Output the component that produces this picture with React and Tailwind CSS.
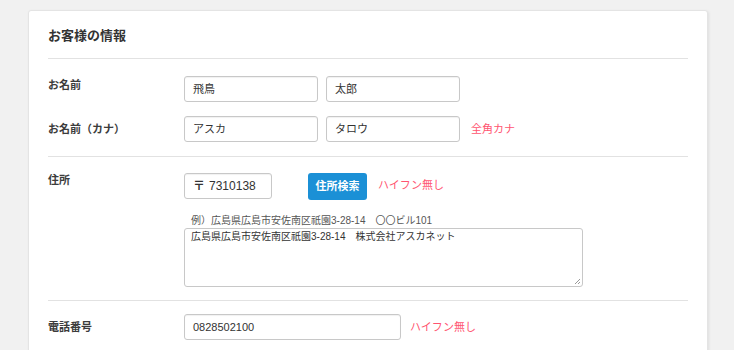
import React from "react";

const font = { fontFamily: '"Liberation Sans", "Noto Sans CJK JP", sans-serif' };

function Input({ w, children }) {
  return (
    <div
      className={`${w} h-[26px] flex items-center px-[8px] border border-[#c8c8c8] rounded-[3px] bg-white text-[11px] text-[#333] shadow-[inset_0_1px_1px_rgba(0,0,0,0.06)]`}
    >
      {children}
    </div>
  );
}

function Note({ children, className = "" }) {
  return <span className={`text-[11px] text-[#ff5470] ${className}`}>{children}</span>;
}

export default function App() {
  return (
    <div className="w-[734px] h-[350px] overflow-hidden bg-[#f1f1f1] pt-[10px] pl-[28px]" style={font}>
      <div className="w-[680px] h-[360px] bg-white border border-[#e4e4e4] rounded-[3px] shadow-[1px_1px_3px_rgba(0,0,0,0.08)] px-[19px]">
        <div className="h-[48px] flex items-center pt-[3px] border-b border-[#e2e2e2]">
          <h2 className="text-[13px] font-bold text-[#333]">お客様の情報</h2>
        </div>

        <div className="border-b border-[#e2e2e2] pt-[17px] pb-[14px] flex flex-col gap-[14px]">
          <div className="flex items-start">
            <div className="w-[136px] pt-[1px] text-[11px] font-semibold text-[#3c3c3c]">お名前</div>
            <div className="flex gap-[8px]">
              <Input w="w-[134px]">飛鳥</Input>
              <Input w="w-[134px]">太郎</Input>
            </div>
          </div>
          <div className="flex items-center">
            <div className="w-[136px] text-[11px] font-semibold text-[#3c3c3c]">お名前（カナ）</div>
            <div className="flex items-center gap-[8px]">
              <Input w="w-[134px]">アスカ</Input>
              <Input w="w-[134px]">タロウ</Input>
              <Note className="ml-[3px]">全角カナ</Note>
            </div>
          </div>
        </div>

        <div className="border-b border-[#e2e2e2] pt-[14px] pb-[13px] flex items-start">
          <div className="w-[136px] pt-[1px] text-[11px] font-semibold text-[#3c3c3c]">住所</div>
          <div className="flex flex-col">
            <div className="flex items-center">
              <Input w="w-[88px]">
                <span className="text-[12px] font-bold mr-[4px]">〒</span>
                <span className="text-[12px]">7310138</span>
              </Input>
              <button className="ml-[36px] mt-[2px] h-[27px] w-[59px] rounded-[3px] bg-[#1b90d6] text-white text-[11px] font-bold">
                住所検索
              </button>
              <Note className="ml-[11px]">ハイフン無し</Note>
            </div>
            <div className="mt-[13px] pl-[7px] text-[10px] leading-[15px] text-[#555]">
              例）広島県広島市安佐南区祇園3-28-14　〇〇ビル101
            </div>
            <div className="w-[399px] h-[59px] border border-[#c8c8c8] rounded-[3px] px-[6px] pt-[1px] text-[10px] leading-[14px] text-[#333] relative">
              広島県広島市安佐南区祇園3-28-14　株式会社アスカネット
              <svg className="absolute right-[1px] bottom-[1px]" width="7" height="7" viewBox="0 0 7 7">
                <path d="M6 1 L1 6 M6 4 L4 6" stroke="#999" strokeWidth="1" />
              </svg>
            </div>
          </div>
        </div>

        <div className="pt-[13px] flex items-center">
          <div className="w-[136px] text-[11px] font-semibold text-[#3c3c3c]">電話番号</div>
          <Input w="w-[217px]">
            <span className="text-[11px]">0828502100</span>
          </Input>
          <Note className="ml-[9px]">ハイフン無し</Note>
        </div>
      </div>
    </div>
  );
}
